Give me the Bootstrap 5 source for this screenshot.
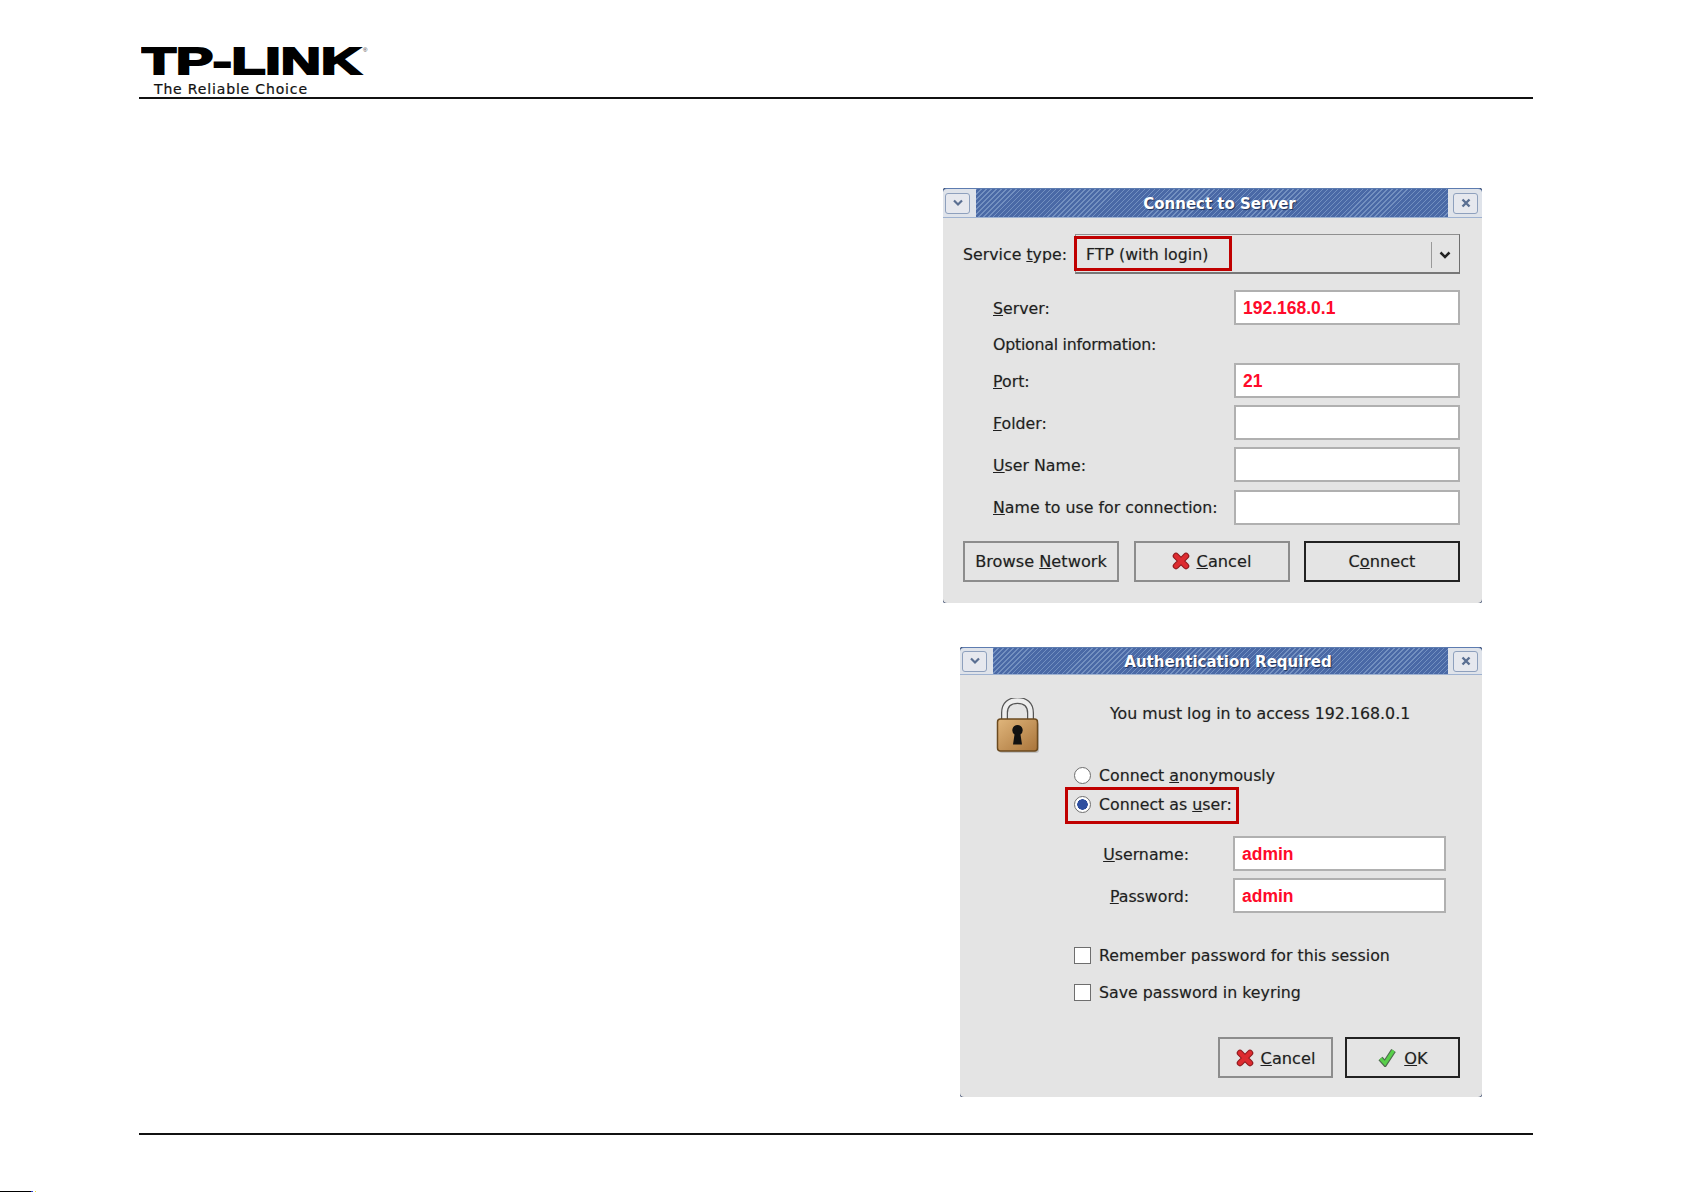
<!DOCTYPE html>
<html lang="en">
<head>
<meta charset="utf-8">
<title>TP-LINK FTP login</title>
<link href="https://cdn.jsdelivr.net/npm/bootstrap@5.3.0/dist/css/bootstrap.min.css" rel="stylesheet">
<style>
html,body{height:1192px;overflow:hidden;background:#fff}
body{font-family:"DejaVu Sans",sans-serif;font-size:15.8px;color:#1f1f1f}
.sheet{margin-left:139px;width:1394px}
.sheet-head{height:99px;border-bottom:2px solid #111}
.brand-svg{display:block;margin-left:2px}
.sheet-main{height:1034px;padding-right:51px}
.gwin{background:#13264f;border-radius:2px;text-shadow:0 0 1px rgba(0,0,0,.3)}
.gwin-a{width:539px;height:415px;margin-top:89px}
.gwin-b{width:522px;height:450px;margin-top:44px}
.gwin-title{height:30px;background:#dfe3ea;padding:0 4px 0 2px;border-top:1px solid #5d7cb0;border-bottom:1px solid #9fb2d0;border-radius:4px 4px 0 0}
.gwin-b .gwin-title{height:28px}
.tbtn{width:25px;height:21px;background:#e6e8ee;border:1px solid #8ea0bd;border-radius:3px}
.thatch{background:repeating-linear-gradient(135deg,#7390c0 0 1px,#4a69a6 1px 3.5px);color:#fff;font-weight:700;font-size:15px;text-shadow:1px 1px 1px #1c2f57;margin:0 5px 0 6px;padding:2px 0 0 15px}
.win-fill{background:#e4e4e4;border-radius:0 0 4px 4px}
.a-body{padding:16px 22px 0 20px}
.b-body{padding:23px 22px 0 35px}
.svc-label{width:112px;padding-top:2px}
.combo{height:40px;background:#e4e4e4;border:1px solid #8f8f8f;border-right-color:#6f6f6f;border-bottom:2px solid #777;padding:3px 0 0 10px}
.combo-sep{width:1px;height:26px;background:#999;margin-right:7px}
.mark-box{position:absolute;border:3px solid #c00000}
.mark-a{left:-2px;top:1px;width:158px;height:35px}
.mark-b{left:-34px;top:-6px;width:174px;height:37px}
.entry.form-control{width:226px;height:35px;border-radius:0;border:2px solid #b0b0b0;background:#fff;padding:1px 7px 0;color:#ff0a2a;font-family:"Liberation Sans",sans-serif;font-weight:700;font-size:17.5px;line-height:30px;min-height:0;text-shadow:none}
.form-a{margin-top:16px;padding-left:30px}
.field-label{width:241px;padding-top:2px}
.opt-row{height:38px;padding-top:2px;letter-spacing:-.25px}
.gap-row{margin-top:7.2px}
.gbtn.btn{height:41px;width:156px;border-radius:0;border:2px solid #8c8c8c;background:#e4e4e4;color:#1f1f1f;font-size:16.2px;padding:3px 0 0;--bs-btn-hover-bg:#e4e4e4;text-shadow:inherit}
.gbtn-def.btn{border-color:#222}
.btn-row{margin-top:16px;gap:14.5px}
.msg-cell{margin-left:68px;padding-top:4px}
.choice-group{margin-left:79px;margin-top:7px}
.choice{height:29px;gap:8px}
.choice input.form-check-input{width:17px;height:17px;margin:0;background-color:#fff;border:1px solid #6e6e6e;flex:none;opacity:1}
.radio-on.form-check-input:checked{background-color:#fff;border-color:#6e6e6e;background-image:radial-gradient(circle,#2f4f9f 0 5px,#fff 5.500px)}
.cred-label{width:194px;text-align:right;margin-right:44px;padding-top:3px}
.cred-group{margin-top:17px}
.entry-sm.form-control{width:213px}
.check-group{margin-top:24px;margin-left:79px}
.check-row{height:37px;gap:8px}
.check-row input.form-check-input{border-radius:0;width:17px;height:17px;margin:0;background-color:#fff;border:1px solid #6e6e6e;flex:none}
.btn-row-b{margin-top:26px;gap:12px}
.gbtn-sm.btn{width:115px}
.sheet-foot{height:2px;background:#111}
.crop-edge{height:1px;width:36px;margin-top:56px;background:linear-gradient(90deg,#000 0 31px,#3040d0 31px 33px,#fff 33px 35px,#e8e040 35px 36px)}
.mini-ico{margin-right:7px;vertical-align:-3px}
</style>
</head>
<body>
<div class="sheet">
  <header class="sheet-head">
    <svg class="brand-svg" width="232" height="97" viewBox="0 0 232 97">
      <text x="1" y="74" textLength="219" lengthAdjust="spacingAndGlyphs" font-family="Liberation Sans" font-weight="700" font-size="37" stroke="#000" stroke-width="2" fill="#000">TP-LINK</text>
      <text x="222" y="52" font-family="Liberation Sans" font-size="6" fill="#333">®</text>
      <text x="13" y="94" textLength="153" font-family="DejaVu Sans" font-size="14" fill="#111" stroke="#111" stroke-width=".2">The Reliable Choice</text>
    </svg>
  </header>
  <main class="sheet-main d-flex flex-column align-items-end">
    <section class="gwin gwin-a d-flex flex-column">
      <div class="gwin-title d-flex align-items-center flex-shrink-0">
        <span class="tbtn d-flex align-items-center justify-content-center flex-shrink-0"><svg width="12" height="8" viewBox="0 0 12 8"><path d="M2 1.500l4 4 4-4" fill="none" stroke="#5a6f92" stroke-width="2.200"/></svg></span>
        <div class="thatch flex-grow-1 h-100 d-flex align-items-center justify-content-center">Connect to Server</div>
        <span class="tbtn d-flex align-items-center justify-content-center flex-shrink-0"><svg width="10" height="10" viewBox="0 0 10 10"><path d="M1.500 1.500l7 7M8.500 1.500l-7 7" stroke="#5a6f92" stroke-width="2.400"/></svg></span>
      </div>
      <div class="a-body win-fill flex-grow-1">
        <div class="d-flex align-items-center">
          <span class="svc-label">Service <u>t</u>ype:</span>
          <div class="combo flex-grow-1 d-flex align-items-center justify-content-between position-relative">
            <span>FTP (with login)</span>
            <span class="mark-box mark-a"></span>
            <span class="d-flex align-items-center"><span class="combo-sep"></span><svg class="me-2" width="12" height="8" viewBox="0 0 12 8"><path d="M1.500 1.500L6 6l4.500-4.500" fill="none" stroke="#222" stroke-width="2.500"/></svg></span>
          </div>
        </div>
        <div class="form-a">
          <div class="d-flex align-items-center"><span class="field-label"><u>S</u>erver:</span><div class="entry form-control">192.168.0.1</div></div>
          <div class="opt-row d-flex align-items-center">Optional information:</div>
          <div class="d-flex align-items-center"><span class="field-label"><u>P</u>ort:</span><div class="entry form-control">21</div></div>
          <div class="gap-row d-flex align-items-center"><span class="field-label"><u>F</u>older:</span><div class="entry form-control"></div></div>
          <div class="gap-row d-flex align-items-center"><span class="field-label"><u>U</u>ser Name:</span><div class="entry form-control"></div></div>
          <div class="gap-row d-flex align-items-center"><span class="field-label"><u>N</u>ame to use for connection:</span><div class="entry form-control"></div></div>
        </div>
        <div class="btn-row d-flex">
          <button class="gbtn btn" type="button">Browse <u>N</u>etwork</button>
          <button class="gbtn btn" type="button"><svg class="mini-ico" width="18" height="18" viewBox="0 0 18 18"><path d="M4 4l10 10M14 4L4 14" stroke="#8e1a1e" stroke-width="6.500" stroke-linecap="round"/><path d="M4 4l10 10M14 4L4 14" stroke="#dd2b30" stroke-width="4.500" stroke-linecap="round"/></svg><u>C</u>ancel</button>
          <button class="gbtn gbtn-def btn" type="button">C<u>o</u>nnect</button>
        </div>
      </div>
    </section>
    <section class="gwin gwin-b d-flex flex-column">
      <div class="gwin-title d-flex align-items-center flex-shrink-0">
        <span class="tbtn d-flex align-items-center justify-content-center flex-shrink-0"><svg width="12" height="8" viewBox="0 0 12 8"><path d="M2 1.500l4 4 4-4" fill="none" stroke="#5a6f92" stroke-width="2.200"/></svg></span>
        <div class="thatch flex-grow-1 h-100 d-flex align-items-center justify-content-center">Authentication Required</div>
        <span class="tbtn d-flex align-items-center justify-content-center flex-shrink-0"><svg width="10" height="10" viewBox="0 0 10 10"><path d="M1.500 1.500l7 7M8.500 1.500l-7 7" stroke="#5a6f92" stroke-width="2.400"/></svg></span>
      </div>
      <div class="b-body win-fill flex-grow-1">
        <div class="d-flex">
          <svg class="flex-shrink-0" width="47" height="56" viewBox="0 0 47 56">
            <defs><linearGradient id="lockg" x1="0" y1="0" x2="1" y2="1"><stop offset="0" stop-color="#e0b67c"/><stop offset="1" stop-color="#a9743a"/></linearGradient></defs>
            <path d="M9.500 24V15C9.500 6 15 2.500 22.500 2.500S35.500 6 35.500 15v9" fill="none" stroke="#555" stroke-width="7"/>
            <path d="M9.500 24V15C9.500 6 15 2.500 22.500 2.500S35.500 6 35.500 15v9" fill="none" stroke="#eee" stroke-width="4.500"/>
            <rect x="4" y="24" width="40" height="31" rx="3" fill="#999" opacity=".5"/>
            <rect x="2.500" y="21" width="40" height="32" rx="3" fill="url(#lockg)" stroke="#6b4a1f" stroke-width="1.500"/>
            <path d="M22.500 27a5.200 5.200 0 0 1 3 9.400l1.500 10h-9l1.500-10a5.200 5.200 0 0 1 3-9.400z" fill="#111"/>
          </svg>
          <div class="msg-cell">You must log in to access 192.168.0.1</div>
        </div>
        <div class="choice-group">
          <div class="choice d-flex align-items-center"><input class="form-check-input rounded-circle" type="radio" name="conn"><span>Connect <u>a</u>nonymously</span></div>
          <div class="choice d-flex align-items-center"><input class="form-check-input radio-on rounded-circle" type="radio" name="conn" checked><span class="position-relative">Connect as <u>u</u>ser:<span class="mark-box mark-b"></span></span></div>
        </div>
        <div class="cred-group">
          <div class="d-flex align-items-center"><span class="cred-label"><u>U</u>sername:</span><div class="entry entry-sm form-control">admin</div></div>
          <div class="gap-row d-flex align-items-center"><span class="cred-label"><u>P</u>assword:</span><div class="entry entry-sm form-control">admin</div></div>
        </div>
        <div class="check-group">
          <div class="check-row d-flex align-items-center"><input class="form-check-input" type="checkbox"><span>Remember password for this session</span></div>
          <div class="check-row d-flex align-items-center"><input class="form-check-input" type="checkbox"><span>Save password in keyring</span></div>
        </div>
        <div class="btn-row-b d-flex justify-content-end">
          <button class="gbtn gbtn-sm btn" type="button"><svg class="mini-ico" width="18" height="18" viewBox="0 0 18 18"><path d="M4 4l10 10M14 4L4 14" stroke="#8e1a1e" stroke-width="6.500" stroke-linecap="round"/><path d="M4 4l10 10M14 4L4 14" stroke="#dd2b30" stroke-width="4.500" stroke-linecap="round"/></svg><u>C</u>ancel</button>
          <button class="gbtn gbtn-sm gbtn-def btn" type="button"><svg class="mini-ico" width="20" height="20" viewBox="0 0 20 20"><path d="M3.500 11.500L8 16.500 16.500 3.500" fill="none" stroke="#4f6a50" stroke-width="5.500"/><path d="M3.500 11.500L8 16.500 16.500 3.500" fill="none" stroke="#58d04a" stroke-width="3.200"/></svg><u>O</u>K</button>
        </div>
      </div>
    </section>
  </main>
  <div class="sheet-foot"></div>
</div>
<div class="crop-edge"></div>
<script src="https://cdn.jsdelivr.net/npm/bootstrap@5.3.0/dist/js/bootstrap.bundle.min.js"></script>
</body>
</html>
